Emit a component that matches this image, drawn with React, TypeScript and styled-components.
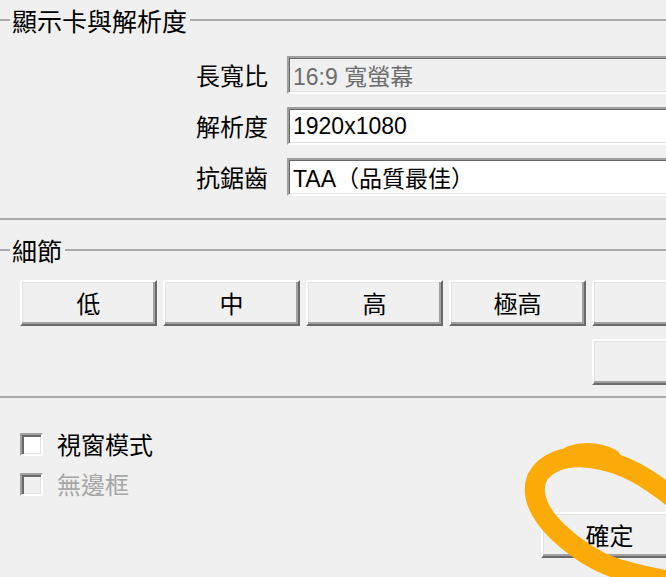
import styled, { createGlobalStyle } from "styled-components";

const GlobalStyle = createGlobalStyle`
  html, body {
    margin: 0;
    padding: 0;
    background: #f0f0f0;
  }
  body {
    font-family: "Noto Sans CJK TC", "Liberation Sans", sans-serif;
    color: #000;
  }
`;

const Screen = styled.div`
  position: relative;
  width: 666px;
  height: 577px;
  overflow: hidden;
  background: #f0f0f0;
`;

const Dialog = styled.div`
  width: 700px;
  margin-left: -8px;
  display: flex;
  flex-direction: column;
`;

const Group = styled.fieldset<{ $top: number }>`
  margin: ${(p) => p.$top}px 0 0;
  padding: 0;
  min-width: 0;
  border: 2px solid #a9a9a9;
`;

const Legend = styled.legend`
  margin-left: 16px;
  padding: 0 3px 0 2px;
  font-size: 25px;
  line-height: 28px;
`;

const FieldGrid = styled.div`
  display: grid;
  grid-template-columns: 274px 1fr;
  column-gap: 19px;
  row-gap: 13px;
  align-items: center;
  padding: 22px 0 22px 0;
`;

const Label = styled.label`
  text-align: right;
  font-size: 24px;
  line-height: 28px;
`;

const TextBox = styled.input`
  box-sizing: border-box;
  width: 100%;
  height: 38px;
  margin: 0;
  padding: 0 4px 0 4px;
  border: 2px solid;
  border-color: #a0a0a0 #ffffff #ffffff #a0a0a0;
  box-shadow: inset 1px 1px 0 #696969, inset -1px -1px 0 #e3e3e3;
  background: #fff;
  font-family: "Liberation Sans", "Noto Sans CJK TC", sans-serif;
  font-size: 23px;
  color: #000;
  outline: none;

  &:disabled {
    background: #f0f0f0;
    color: #6d6d6d;
  }
`;

const ButtonGrid = styled.div`
  display: grid;
  grid-template-columns: repeat(5, 137px);
  grid-auto-rows: 46px;
  column-gap: 6px;
  row-gap: 13px;
  padding: 16px 0 11px 26px;
`;

const WinButton = styled.button<{ $col?: number }>`
  box-sizing: border-box;
  grid-column: ${(p) => p.$col ?? "auto"};
  width: 137px;
  height: 46px;
  margin: 0;
  padding: 0;
  border: 2px solid;
  border-color: #ffffff #696969 #696969 #ffffff;
  box-shadow: inset -2px -2px 0 #a0a0a0, inset 1px 1px 0 #e3e3e3;
  background: #f0f0f0;
  font-family: "Noto Sans CJK TC", "Liberation Sans", sans-serif;
  font-size: 24px;
  line-height: 28px;
  color: #000;
`;

const Footer = styled.div`
  display: flex;
  flex-direction: column;
  padding: 32px 14px 0 28px;
`;

const CheckList = styled.div`
  display: flex;
  flex-direction: column;
  gap: 12px;
`;

const CheckRow = styled.label<{ $disabled?: boolean }>`
  display: flex;
  align-items: center;
  gap: 14px;
  height: 28px;
  font-size: 24px;
  line-height: 28px;
  color: ${(p) => (p.$disabled ? "#a6a6a6" : "#000")};
`;

const CheckBox = styled.span<{ $disabled?: boolean }>`
  box-sizing: border-box;
  width: 23px;
  height: 23px;
  border: 2px solid;
  border-color: #a0a0a0 #ffffff #ffffff #a0a0a0;
  box-shadow: inset 2px 2px 0 #696969, inset -1px -1px 0 #e3e3e3;
  background: ${(p) => (p.$disabled ? "#f0f0f0" : "#fff")};
`;

const ActionRow = styled.div`
  display: flex;
  justify-content: flex-end;
  margin-top: 14px;
`;

const Scribble = styled.svg`
  position: absolute;
  inset: 0;
  pointer-events: none;
`;

const presets = ["低", "中", "高", "極高", ""];

export default function App() {
  return (
    <>
      <GlobalStyle />
      <Screen>
        <Dialog>
          <Group $top={6}>
            <Legend>顯示卡與解析度</Legend>
            <FieldGrid>
              <Label>長寬比</Label>
              <TextBox disabled value="16:9 寬螢幕" readOnly />
              <Label>解析度</Label>
              <TextBox value="1920x1080" readOnly />
              <Label>抗鋸齒</Label>
              <TextBox value="TAA（品質最佳）" readOnly />
            </FieldGrid>
          </Group>

          <Group $top={16}>
            <Legend>細節</Legend>
            <ButtonGrid>
              {presets.map((p, i) => (
                <WinButton key={i}>{p}</WinButton>
              ))}
              <WinButton $col={5} />
            </ButtonGrid>
          </Group>

          <Footer>
            <CheckList>
              <CheckRow>
                <CheckBox />
                視窗模式
              </CheckRow>
              <CheckRow $disabled>
                <CheckBox $disabled />
                無邊框
              </CheckRow>
            </CheckList>
            <ActionRow>
              <WinButton>確定</WinButton>
            </ActionRow>
          </Footer>
        </Dialog>

        <Scribble width="666" height="577" viewBox="0 0 666 577">
          <path
            d="M 672 497 C 650 480, 625 462, 590 458 C 565 455, 545 462, 537 478 C 530 495, 540 515, 558 532 C 575 548, 592 560, 615 568 C 635 574, 655 578, 674 582"
            fill="none"
            stroke="#fbaa07"
            strokeWidth="20"
            strokeLinecap="round"
            strokeLinejoin="round"
          />
          <path
            d="M 570 455 C 585 450, 600 452, 612 458"
            fill="none"
            stroke="#fbaa07"
            strokeWidth="18"
            strokeLinecap="round"
          />
        </Scribble>
      </Screen>
    </>
  );
}
